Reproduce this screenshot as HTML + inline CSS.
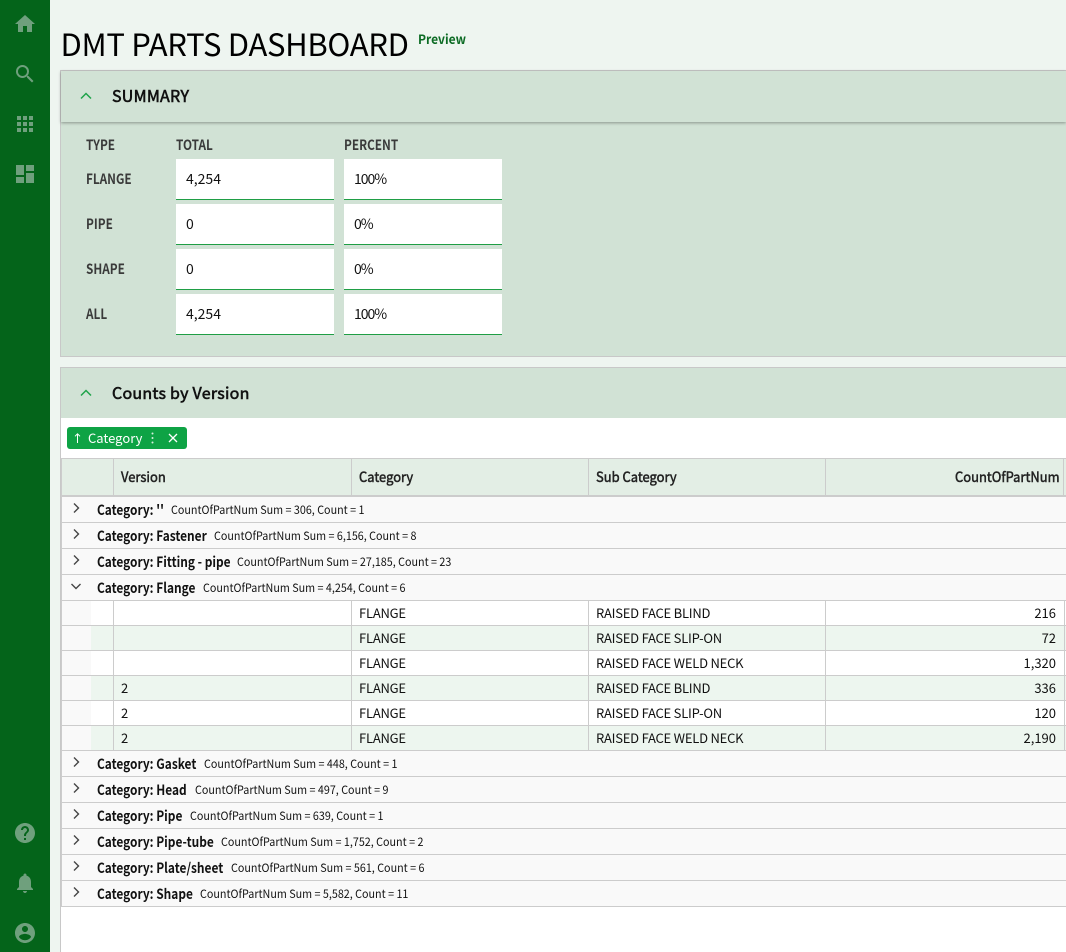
<!DOCTYPE html>
<html><head><meta charset="utf-8"><style>
*{box-sizing:border-box}
html,body{margin:0;padding:0;width:1066px;height:952px;overflow:hidden;background:#eef5f0;font-family:"Noto Sans CJK JP","Liberation Sans",sans-serif;color:#111}
div,span,svg{position:absolute}
.t{white-space:nowrap;line-height:20px}
.ic{width:24px;height:24px;fill:#6fa07d}
.lb{font-size:14px;font-weight:700;color:#3a3a3a;left:86px;transform:scaleX(.84);transform-origin:0 0}
.in{background:#fff;border-bottom:1px solid #1f9e45;width:158px;height:41px;font-size:14px;padding:10px 10px 0;line-height:20px}
.in.p{letter-spacing:-1px}
.h2{left:112px;font-size:16px;color:#111;-webkit-text-stroke:.6px #111;letter-spacing:.25px}
.gr{left:62px;width:1004px;height:26px;background:#f9f9f9;border-bottom:1px solid #ccc}
.gr b{position:absolute;left:35px;top:3px;font-size:14px;font-weight:700;line-height:20px;white-space:nowrap;color:#111;transform:scaleX(.85);transform-origin:0 0}
.gr i{position:absolute;top:3px;font-style:normal;font-size:11.5px;line-height:20px;white-space:nowrap;color:#111;transform:scaleX(.935);transform-origin:0 0}
.gr svg{left:8px;top:5px;width:12px;height:12px;fill:none;stroke:#444;stroke-width:1.4}
.dr{left:62px;width:1004px;height:25px;background:#fff;border-bottom:1px solid #ccc;font-size:13px}
.dr.a{background:#edf6ef}
.dr .s{left:0;top:0;width:29px;height:24px;background:#f9f9f9}
.dr .l{top:0;width:1px;height:24px;background:#ccc}
.dr .c{top:2px;line-height:20px;white-space:nowrap;letter-spacing:-.23px}
.dr .n{letter-spacing:0}
.hd{font-size:14px;line-height:20px;white-space:nowrap;top:467px;color:#222;-webkit-text-stroke:.5px #222;transform:scaleX(.925);transform-origin:0 0}
.vl{top:459px;width:1px;height:36px;background:#ccc}
</style></head><body>
<div style="left:0;top:0;width:50px;height:952px;background:#04641a"></div>
<svg class="ic" style="left:13px;top:12px" viewBox="0 0 24 24"><path d="M10 20v-6h4v6h5v-8h3L12 3 2 12h3v8z"/></svg>
<svg class="ic" style="left:13px;top:62px" viewBox="0 0 24 24"><path d="M15.5 14h-.79l-.28-.27A6.471 6.471 0 0 0 16 9.5 6.5 6.5 0 1 0 9.5 16c1.61 0 3.09-.59 4.23-1.57l.27.28v.79l5 4.99L20.49 19l-4.99-5zm-6 0C7.01 14 5 11.99 5 9.5S7.01 5 9.5 5 14 7.01 14 9.5 11.99 14 9.5 14z"/></svg>
<svg class="ic" style="left:13px;top:112px" viewBox="0 0 24 24"><path d="M4 8h4V4H4zm6 0h4V4h-4zm6 0h4V4h-4zM4 14h4v-4H4zm6 0h4v-4h-4zm6 0h4v-4h-4zM4 20h4v-4H4zm6 0h4v-4h-4zm6 0h4v-4h-4z"/></svg>
<svg class="ic" style="left:13px;top:162px" viewBox="0 0 24 24"><path d="M3 13h8V3H3v10zm0 8h8v-6H3v6zm10 0h8V11h-8v10zm0-18v6h8V3h-8z"/></svg>
<svg class="ic" style="left:13px;top:821px" viewBox="0 0 24 24"><path d="M12 2C6.48 2 2 6.48 2 12s4.48 10 10 10 10-4.48 10-10S17.52 2 12 2zm1 17h-2v-2h2v2zm2.07-7.75l-.9.92C13.45 12.9 13 13.5 13 15h-2v-.5c0-1.1.45-2.1 1.17-2.83l1.24-1.26c.37-.36.59-.86.59-1.41 0-1.1-.9-2-2-2s-2 .9-2 2H8c0-2.21 1.79-4 4-4s4 1.79 4 4c0 .88-.36 1.68-.93 2.25z"/></svg>
<svg class="ic" style="left:13px;top:871px" viewBox="0 0 24 24"><path d="M12 22c1.1 0 2-.9 2-2h-4c0 1.1.89 2 2 2zm6-6v-5c0-3.07-1.64-5.64-4.5-6.32V4c0-.83-.67-1.5-1.5-1.5s-1.5.67-1.5 1.5v.68C7.63 5.36 6 7.92 6 11v5l-2 2v1h16v-1l-2-2z"/></svg>
<svg class="ic" style="left:13px;top:921px" viewBox="0 0 24 24"><path d="M12 2C6.48 2 2 6.48 2 12s4.48 10 10 10 10-4.48 10-10S17.52 2 12 2zm0 3c1.66 0 3 1.34 3 3s-1.34 3-3 3-3-1.34-3-3 1.34-3 3-3zm0 14.2c-2.5 0-4.71-1.28-6-3.22.03-1.99 4-3.08 6-3.08 1.99 0 5.97 1.09 6 3.08-1.29 1.94-3.5 3.22-6 3.22z"/></svg>

<div class="t" style="left:60.5px;top:23px;font-size:31px;letter-spacing:-.33px;line-height:40px;color:#000">DMT PARTS DASHBOARD</div>
<div class="t" style="left:417.5px;top:29px;font-size:13px;font-weight:700;color:#0c6b24;transform:scaleX(.925);transform-origin:0 0">Preview</div>

<div style="left:60px;top:70px;width:1006px;height:287px;background:#d1e2d5;border:1px solid #c8c8c8;border-right:0"></div>
<div style="left:61px;top:71px;width:1005px;height:51px;background:#d1e2d5;box-shadow:0 1px 3px rgba(0,0,0,.35)"></div>
<svg style="left:80px;top:92px;width:12px;height:8px" viewBox="0 0 12 8"><path d="M1 6.5L6 1.5l5 5" fill="none" stroke="#1fa34a" stroke-width="1.5"/></svg>
<div class="t h2" style="top:85px">SUMMARY</div>

<div class="t lb" style="top:135px">TYPE</div>
<div class="t lb" style="left:176px;top:135px">TOTAL</div>
<div class="t lb" style="left:344px;top:135px">PERCENT</div>
<div class="t lb" style="top:169px">FLANGE</div>
<div class="t lb" style="top:214px">PIPE</div>
<div class="t lb" style="top:259px">SHAPE</div>
<div class="t lb" style="top:304px">ALL</div>
<div class="in" style="left:176px;top:159px">4,254</div><div class="in p" style="left:344px;top:159px">100%</div>
<div class="in" style="left:176px;top:204px">0</div><div class="in p" style="left:344px;top:204px">0%</div>
<div class="in" style="left:176px;top:249px">0</div><div class="in p" style="left:344px;top:249px">0%</div>
<div class="in" style="left:176px;top:294px">4,254</div><div class="in p" style="left:344px;top:294px">100%</div>

<div style="left:60px;top:367px;width:1006px;height:585px;background:#fff;border-left:1px solid #c8c8c8;border-top:1px solid #c8c8c8"></div>
<div style="left:61px;top:368px;width:1005px;height:50px;background:#d1e2d5"></div>
<svg style="left:80px;top:389px;width:12px;height:8px" viewBox="0 0 12 8"><path d="M1 6.5L6 1.5l5 5" fill="none" stroke="#1fa34a" stroke-width="1.5"/></svg>
<div class="t h2" style="top:382px">Counts by Version</div>

<div style="left:67px;top:427px;width:120px;height:22px;background:#0ea345;border-radius:3px"></div>
<svg style="left:72px;top:432px;width:11px;height:12px" viewBox="0 0 11 12"><path d="M5.5 11V2M3 4.3L5.5 1.8 8 4.3" fill="none" stroke="#fff" stroke-width="1"/></svg>
<div class="t" style="left:88px;top:428px;font-size:13px;color:#fff">Category</div>
<svg style="left:150px;top:432px;width:5px;height:12px" viewBox="0 0 5 12"><circle cx="2.5" cy="1.5" r="1" fill="#d8f0df"/><circle cx="2.5" cy="6" r="1" fill="#d8f0df"/><circle cx="2.5" cy="10.5" r="1" fill="#d8f0df"/></svg>
<svg style="left:168px;top:433px;width:10px;height:10px" viewBox="0 0 10 10"><path d="M1 1l8 8M9 1L1 9" stroke="#fff" stroke-width="1.3"/></svg>

<div style="left:61px;top:458px;width:1005px;height:39px;background:#e3eee5;border-top:1px solid #ccc;border-left:1px solid #ccc;border-bottom:2px solid #ccc"></div>
<div class="vl" style="left:113px"></div><div class="vl" style="left:351px"></div><div class="vl" style="left:588px"></div><div class="vl" style="left:825px"></div><div class="vl" style="left:1063px"></div>
<div class="hd" style="left:121px">Version</div>
<div class="hd" style="left:359px">Category</div>
<div class="hd" style="left:596px">Sub Category</div>
<div class="hd" style="left:955px">CountOfPartNum</div>

<div style="left:61px;top:497px;width:1px;height:410px;background:#ccc"></div>

<div class="gr" style="top:497px"><svg viewBox="0 0 12 12"><path d="M4 1.5L8.5 6 4 10.5"/></svg><b>Category: ''</b><i style="left:109px">CountOfPartNum Sum = 306, Count = 1</i></div>
<div class="gr" style="top:523px"><svg viewBox="0 0 12 12"><path d="M4 1.5L8.5 6 4 10.5"/></svg><b>Category: Fastener</b><i style="left:152px">CountOfPartNum Sum = 6,156, Count = 8</i></div>
<div class="gr" style="top:549px"><svg viewBox="0 0 12 12"><path d="M4 1.5L8.5 6 4 10.5"/></svg><b>Category: Fitting - pipe</b><i style="left:175px">CountOfPartNum Sum = 27,185, Count = 23</i></div>
<div class="gr" style="top:575px"><svg viewBox="0 0 12 12"><path d="M1.5 4L6 8.5 10.5 4"/></svg><b>Category: Flange</b><i style="left:141px">CountOfPartNum Sum = 4,254, Count = 6</i></div>

<div class="dr" style="top:601px"><div class="s"></div><div class="l" style="left:51px"></div><div class="l" style="left:289px"></div><div class="l" style="left:526px"></div><div class="l" style="left:763px"></div><div class="l" style="left:1002px"></div><div class="c" style="left:297px">FLANGE</div><div class="c" style="left:534px">RAISED FACE BLIND</div><div class="c n" style="right:10px">216</div></div>
<div class="dr a" style="top:626px"><div class="s"></div><div class="l" style="left:51px"></div><div class="l" style="left:289px"></div><div class="l" style="left:526px"></div><div class="l" style="left:763px"></div><div class="l" style="left:1002px"></div><div class="c" style="left:297px">FLANGE</div><div class="c" style="left:534px">RAISED FACE SLIP-ON</div><div class="c n" style="right:10px">72</div></div>
<div class="dr" style="top:651px"><div class="s"></div><div class="l" style="left:51px"></div><div class="l" style="left:289px"></div><div class="l" style="left:526px"></div><div class="l" style="left:763px"></div><div class="l" style="left:1002px"></div><div class="c" style="left:297px">FLANGE</div><div class="c" style="left:534px">RAISED FACE WELD NECK</div><div class="c n" style="right:10px">1,320</div></div>
<div class="dr a" style="top:676px"><div class="s"></div><div class="l" style="left:51px"></div><div class="l" style="left:289px"></div><div class="l" style="left:526px"></div><div class="l" style="left:763px"></div><div class="l" style="left:1002px"></div><div class="c" style="left:59px">2</div><div class="c" style="left:297px">FLANGE</div><div class="c" style="left:534px">RAISED FACE BLIND</div><div class="c n" style="right:10px">336</div></div>
<div class="dr" style="top:701px"><div class="s"></div><div class="l" style="left:51px"></div><div class="l" style="left:289px"></div><div class="l" style="left:526px"></div><div class="l" style="left:763px"></div><div class="l" style="left:1002px"></div><div class="c" style="left:59px">2</div><div class="c" style="left:297px">FLANGE</div><div class="c" style="left:534px">RAISED FACE SLIP-ON</div><div class="c n" style="right:10px">120</div></div>
<div class="dr a" style="top:726px"><div class="s"></div><div class="l" style="left:51px"></div><div class="l" style="left:289px"></div><div class="l" style="left:526px"></div><div class="l" style="left:763px"></div><div class="l" style="left:1002px"></div><div class="c" style="left:59px">2</div><div class="c" style="left:297px">FLANGE</div><div class="c" style="left:534px">RAISED FACE WELD NECK</div><div class="c n" style="right:10px">2,190</div></div>

<div class="gr" style="top:751px"><svg viewBox="0 0 12 12"><path d="M4 1.5L8.5 6 4 10.5"/></svg><b>Category: Gasket</b><i style="left:142px">CountOfPartNum Sum = 448, Count = 1</i></div>
<div class="gr" style="top:777px"><svg viewBox="0 0 12 12"><path d="M4 1.5L8.5 6 4 10.5"/></svg><b>Category: Head</b><i style="left:133px">CountOfPartNum Sum = 497, Count = 9</i></div>
<div class="gr" style="top:803px"><svg viewBox="0 0 12 12"><path d="M4 1.5L8.5 6 4 10.5"/></svg><b>Category: Pipe</b><i style="left:128px">CountOfPartNum Sum = 639, Count = 1</i></div>
<div class="gr" style="top:829px"><svg viewBox="0 0 12 12"><path d="M4 1.5L8.5 6 4 10.5"/></svg><b>Category: Pipe-tube</b><i style="left:159px">CountOfPartNum Sum = 1,752, Count = 2</i></div>
<div class="gr" style="top:855px"><svg viewBox="0 0 12 12"><path d="M4 1.5L8.5 6 4 10.5"/></svg><b>Category: Plate/sheet</b><i style="left:169px">CountOfPartNum Sum = 561, Count = 6</i></div>
<div class="gr" style="top:881px"><svg viewBox="0 0 12 12"><path d="M4 1.5L8.5 6 4 10.5"/></svg><b>Category: Shape</b><i style="left:138px">CountOfPartNum Sum = 5,582, Count = 11</i></div>
</body></html>
